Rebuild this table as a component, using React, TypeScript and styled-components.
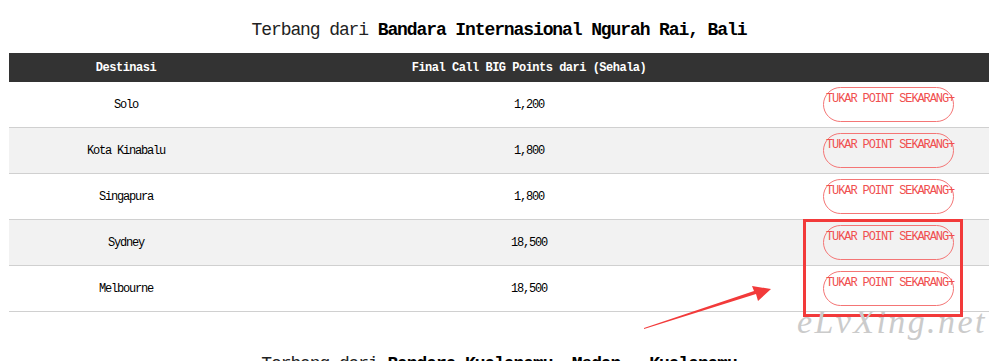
import React from "react";
import styled, { createGlobalStyle } from "styled-components";

const Global = createGlobalStyle`
  html, body { margin: 0; padding: 0; background: #fff; }
  body { font-family: "Liberation Mono", "DejaVu Sans Mono", monospace; color: #000; }
`;

const Page = styled.div`
  position: relative;
  box-sizing: border-box;
  width: 1005px;
  height: 361px;
  overflow: hidden;
  padding: 18px 0 0 9px;
`;

const Content = styled.div`
  width: 980px;
`;

const Title = styled.h2<{ $gap?: number }>`
  margin: ${(p) => p.$gap ?? 0}px 0 11px;
  font-size: 18px;
  line-height: 24px;
  font-weight: normal;
  letter-spacing: -1.1px;
  text-align: center;
  color: #222;
  white-space: nowrap;
  b { font-weight: bold; color: #000; }
`;

const Table = styled.div`
  display: flex;
  flex-direction: column;
`;

const Row = styled.div<{ $alt?: boolean }>`
  display: grid;
  grid-template-columns: 234px 572px 174px;
  align-items: center;
  height: 45px;
  border-bottom: 1px solid #d0d0d0;
  background: ${(p) => (p.$alt ? "#f2f2f2" : "#fff")};
  font-size: 12px;
  letter-spacing: -1.2px;
`;

const HeadRow = styled.div`
  display: grid;
  grid-template-columns: 234px 572px 174px;
  align-items: center;
  height: 29px;
  background: #333;
  color: #fff;
  font-size: 12px;
  font-weight: bold;
  letter-spacing: -0.5px;
`;

const Cell = styled.div`
  text-align: center;
  white-space: nowrap;
`;

const ActionCell = styled.div`
  padding-left: 8px;
  display: flex;
`;

const Button = styled.a`
  box-sizing: border-box;
  display: block;
  width: 131px;
  height: 35px;
  padding: 0 0 0 2px;
  border: 1px solid #f47575;
  border-radius: 18px;
  color: #f04f4f;
  font-size: 12px;
  line-height: 22px;
  letter-spacing: -1.1px;
  white-space: nowrap;
  text-decoration: none;
  cursor: pointer;
`;

const Overlay = styled.div`
  position: absolute;
  inset: 0;
  pointer-events: none;
`;

const RedBox = styled.div`
  position: absolute;
  left: 803px;
  top: 219px;
  width: 154px;
  height: 92px;
  border: 3px solid #f23a3a;
`;

const Arrow = styled.svg`
  position: absolute;
  left: 0;
  top: 0;
`;

const Watermark = styled.div`
  position: absolute;
  left: 797px;
  top: 303px;
  font-family: "Liberation Serif", "DejaVu Serif", serif;
  font-style: italic;
  font-size: 34px;
  letter-spacing: 2.4px;
  color: #cbcbcb;
  white-space: nowrap;
`;

const rows = [
  { dest: "Solo", pts: "1,200" },
  { dest: "Kota Kinabalu", pts: "1,800" },
  { dest: "Singapura", pts: "1,800" },
  { dest: "Sydney", pts: "18,500" },
  { dest: "Melbourne", pts: "18,500" },
];

export default function App() {
  return (
    <>
      <Global />
      <Page>
        <Content>
          <Title>
            Terbang dari <b>Bandara Internasional Ngurah Rai, Bali</b>
          </Title>
          <Table>
            <HeadRow>
              <Cell>Destinasi</Cell>
              <Cell>Final Call BIG Points dari (Sehala)</Cell>
              <Cell />
            </HeadRow>
            {rows.map((r, i) => (
              <Row key={r.dest} $alt={i % 2 === 1}>
                <Cell>{r.dest}</Cell>
                <Cell>{r.pts}</Cell>
                <ActionCell>
                  <Button>TUKAR POINT SEKARANG+</Button>
                </ActionCell>
              </Row>
            ))}
          </Table>
          <Title $gap={40}>
            Terbang dari <b>Bandara Kualanamu, Medan - Kualanamu</b>
          </Title>
        </Content>
        <Overlay>
          <RedBox />
          <Arrow width="1005" height="361" viewBox="0 0 1005 361">
            <polygon
              points="644,329 756,294 758,301 771,289 752,286 754,291 644,328"
              fill="#f23a3a"
            />
          </Arrow>
          <Watermark>eLvXing.net</Watermark>
        </Overlay>
      </Page>
    </>
  );
}
